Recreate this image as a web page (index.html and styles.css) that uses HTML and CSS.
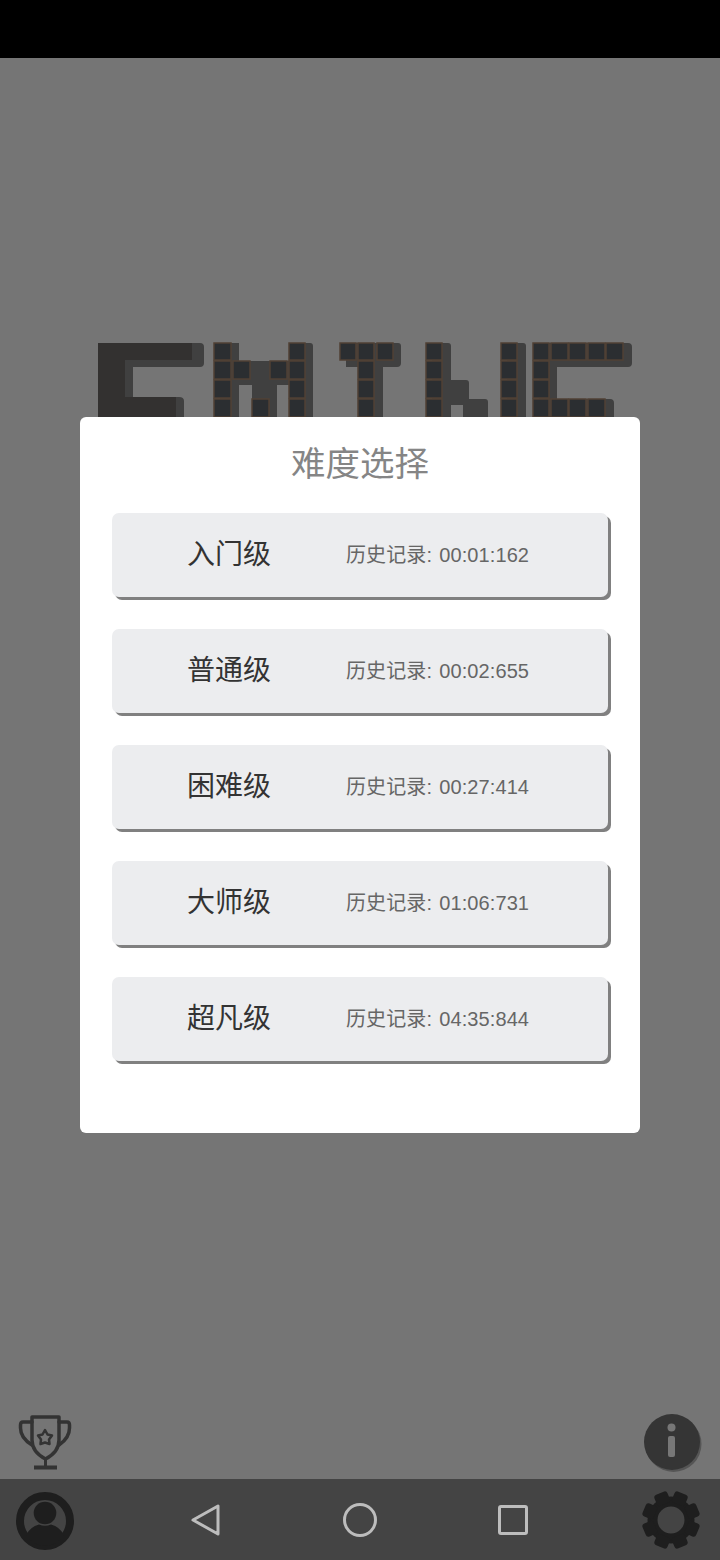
FILE: index.html
```html
<!DOCTYPE html>
<html lang="zh-CN">
<head>
<meta charset="utf-8">
<title>难度选择</title>
<link rel="stylesheet" href="styles.css">
</head>
<body>
<div class="screen">
    <div class="status"></div>

    <div class="stage">
        <!-- game logo, sits behind the dialog -->
        <svg class="logo" width="720" height="120" viewBox="0 342 720 120">
            <g class="shade">
                <path d="M106 343H200Q204 343 204 347V363Q204 367 200 367H133V397H179Q184 397 184 401V462H106Z"/>
                <path d="M220 343H239V361H289V343H310Q313 343 313 346V462H289V385H277V462H252V385H239V462H220Z"/>
                <path d="M346 343H398Q401 343 401 346V363Q401 367 397 367H383V462H358V367H346Z"/>
                <path d="M432 343H448Q451 343 451 346V380H466Q469 380 469 383V399H485Q488 399 488 402V462H463V405H451V462H432Z"/>
                <path d="M507 343H523Q526 343 526 346V462H507Z"/>
                <path d="M539 343H628Q632 343 632 347V363Q632 367 628 367H557V399H610Q614 399 614 403V462H539Z"/>
            </g>
            <g class="face">
                <path d="M98 343H192V360H125V397H176V462H98Z"/>
            </g>
            <g class="cells">
                <rect x="214" y="343" width="17" height="17"/><rect x="214" y="361" width="17" height="18"/><rect x="214" y="380" width="17" height="18"/><rect x="214" y="399" width="17" height="18"/>
                <rect x="233" y="361" width="17" height="18"/>
                <rect x="252" y="399" width="17" height="18"/>
                <rect x="270" y="361" width="17" height="18"/>
                <rect x="289" y="343" width="16" height="17"/><rect x="289" y="361" width="16" height="18"/><rect x="289" y="380" width="16" height="18"/><rect x="289" y="399" width="16" height="18"/>
                <rect x="340" y="343" width="16" height="17"/><rect x="358" y="343" width="16" height="17"/><rect x="377" y="343" width="16" height="17"/>
                <rect x="358" y="361" width="16" height="18"/><rect x="358" y="380" width="16" height="18"/><rect x="358" y="399" width="16" height="18"/>
                <rect x="426" y="343" width="16" height="17"/><rect x="426" y="361" width="16" height="18"/><rect x="426" y="380" width="16" height="18"/><rect x="426" y="399" width="16" height="18"/>
                <rect x="501" y="343" width="16" height="17"/><rect x="501" y="361" width="16" height="18"/><rect x="501" y="380" width="16" height="18"/><rect x="501" y="399" width="16" height="18"/>
                <rect x="533" y="343" width="16" height="17"/><rect x="551" y="343" width="17" height="17"/><rect x="569" y="343" width="17" height="17"/><rect x="588" y="343" width="17" height="17"/><rect x="606" y="343" width="17" height="17"/>
                <rect x="533" y="361" width="16" height="18"/><rect x="533" y="380" width="16" height="18"/>
                <rect x="533" y="399" width="16" height="18"/><rect x="551" y="399" width="17" height="18"/><rect x="569" y="399" width="17" height="18"/><rect x="588" y="399" width="17" height="18"/>
            </g>
        </svg>

        <!-- trophy and info buttons above the nav bar -->
        <div class="corner-row">
            <svg class="trophy" width="54" height="56" viewBox="0 0 54 56" fill="none">
                <path d="M14 3H41V26Q41 38 27.500 45Q14 38 14 26Z" stroke="#333" stroke-width="3.500" stroke-linejoin="round"/>
                <path d="M14 8H5Q2.500 8 2.500 11V14Q2.500 24 14 31M41 8H49Q51.500 8 51.500 11V14Q51.500 24 41 31" stroke="#333" stroke-width="3.500" stroke-linecap="round"/>
                <path d="M27.500 45V53" stroke="#333" stroke-width="3"/>
                <path d="M16 53.500H39" stroke="#333" stroke-width="4"/>
                <path d="M27 16L29.500 20.500L34 21.500L31 25.500L31.500 30L27 28.500L22.500 30L23 25.500L20 21.500L24.500 20.500Z" stroke="#333" stroke-width="2.500" stroke-linejoin="round"/>
            </svg>
            <svg class="info" width="60" height="60" viewBox="0 0 60 60">
                <circle cx="30.500" cy="31" r="28" fill="#555"/>
                <circle cx="29" cy="29" r="28" fill="#353535"/>
                <circle cx="28.500" cy="14.500" r="4" fill="#777"/>
                <rect x="25" y="23" width="7" height="21" rx="2" fill="#777"/>
            </svg>
        </div>

        <div class="dialog">
            <h1 class="dialog-title">难度选择</h1>
            <div class="level-list">
                <button class="level">
                    <span class="level-name">入门级</span>
                    <span class="level-record">历史记录: 00:01:162</span>
                </button>
                <button class="level">
                    <span class="level-name">普通级</span>
                    <span class="level-record">历史记录: 00:02:655</span>
                </button>
                <button class="level">
                    <span class="level-name">困难级</span>
                    <span class="level-record">历史记录: 00:27:414</span>
                </button>
                <button class="level">
                    <span class="level-name">大师级</span>
                    <span class="level-record">历史记录: 01:06:731</span>
                </button>
                <button class="level">
                    <span class="level-name">超凡级</span>
                    <span class="level-record">历史记录: 04:35:844</span>
                </button>
            </div>
        </div>
    </div>

    <div class="nav">
        <svg class="user" width="60" height="60" viewBox="0 0 60 60">
            <circle cx="30" cy="30" r="25" fill="none" stroke="#1e1e1e" stroke-width="8"/>
            <circle cx="30" cy="22" r="11.300" fill="#1e1e1e"/>
            <path d="M11 44Q15 36 24 33.500Q30 36 36 33.500Q45 36 49 44Q42 55 30 55Q18 55 11 44Z" fill="#1e1e1e"/>
        </svg>
        <div class="nav-keys">
            <svg width="32" height="34" viewBox="0 0 32 34" fill="none"><path d="M3 17L28 3V31Z" stroke="#bdbdbd" stroke-width="3" stroke-linejoin="round"/></svg>
            <svg width="34" height="34" viewBox="0 0 34 34" fill="none"><circle cx="17" cy="17" r="15.500" stroke="#bdbdbd" stroke-width="3"/></svg>
            <svg width="30" height="30" viewBox="0 0 30 30" fill="none"><rect x="1.500" y="1.500" width="27" height="27" rx="1.500" stroke="#bdbdbd" stroke-width="3"/></svg>
        </div>
        <svg class="gear" width="60" height="60" viewBox="0 0 60 60">
            <circle cx="30" cy="30" r="18.500" fill="none" stroke="#1e1e1e" stroke-width="10"/>
            <g fill="#1e1e1e">
                <rect x="23" y="1" width="14" height="12" rx="3" transform="rotate(22.500 30 30)"/>
                <rect x="23" y="1" width="14" height="12" rx="3" transform="rotate(67.500 30 30)"/>
                <rect x="23" y="1" width="14" height="12" rx="3" transform="rotate(112.500 30 30)"/>
                <rect x="23" y="1" width="14" height="12" rx="3" transform="rotate(157.500 30 30)"/>
                <rect x="23" y="1" width="14" height="12" rx="3" transform="rotate(202.500 30 30)"/>
                <rect x="23" y="1" width="14" height="12" rx="3" transform="rotate(247.500 30 30)"/>
                <rect x="23" y="1" width="14" height="12" rx="3" transform="rotate(292.500 30 30)"/>
                <rect x="23" y="1" width="14" height="12" rx="3" transform="rotate(337.500 30 30)"/>
            </g>
        </svg>
    </div>
</div>
</body>
</html>
```

FILE: styles.css
```css
html, body {
    margin: 0;
    padding: 0;
}
body {
    font-family: "Liberation Sans", "Noto Sans CJK SC", sans-serif;
}
.screen {
    width: 720px;
    height: 1560px;
    display: flex;
    flex-direction: column;
    overflow: hidden;
}
.status {
    height: 58px;
    background-color: #000;
}
.stage {
    position: relative;
    flex: 1;
    display: flex;
    flex-direction: column;
    justify-content: space-between;
    background-color: #757575;
}
.logo {
    display: block;
    margin-top: 284px;
    filter: blur(0.7px);
}
.shade {
    fill: #404040;
}
.face {
    fill: #333130;
}
.cells rect {
    fill: #2b2e31;
    stroke: #504034;
    stroke-width: 1.5;
}

.corner-row {
    display: flex;
    justify-content: space-between;
    align-items: flex-end;
    padding: 0 17px 9px;
}
.trophy {
    margin-left: 1px;
}
.info {
    margin-bottom: -3px;
}

.dialog {
    position: absolute;
    left: 80px;
    top: 359px;
    width: 560px;
    height: 716px;
    box-sizing: border-box;
    padding: 22px 32px 0;
    background-color: #fff;
    border-radius: 6px;
}
.dialog-title {
    margin: 0 0 24px;
    font-size: 34.500px;
    font-weight: 400;
    line-height: 50px;
    text-align: center;
    color: #858585;
}
.level-list {
    display: flex;
    flex-direction: column;
    gap: 32px;
}
.level {
    display: flex;
    align-items: center;
    height: 84px;
    width: 496px;
    padding: 0 0 0 75px;
    border: 0;
    border-radius: 7px;
    background-color: #ecedef;
    box-shadow: 3px 3px 0 #808080;
    font-family: inherit;
    text-align: left;
}
.level-name {
    width: 159px;
    margin-bottom: 6px;
    font-size: 28px;
    color: #333;
}
.level-record {
    margin-bottom: 4px;
    font-size: 20px;
    letter-spacing: 0.100px;
    word-spacing: 1.500px;
    color: #666;
}

.nav {
    height: 81px;
    display: flex;
    align-items: center;
    justify-content: space-between;
    padding: 0 19px 0 15px;
    background-color: #444;
}
.user {
    margin-top: 2px;
}
.nav-keys {
    display: flex;
    align-items: center;
    gap: 121px;
    margin-left: 2px;
}
```
